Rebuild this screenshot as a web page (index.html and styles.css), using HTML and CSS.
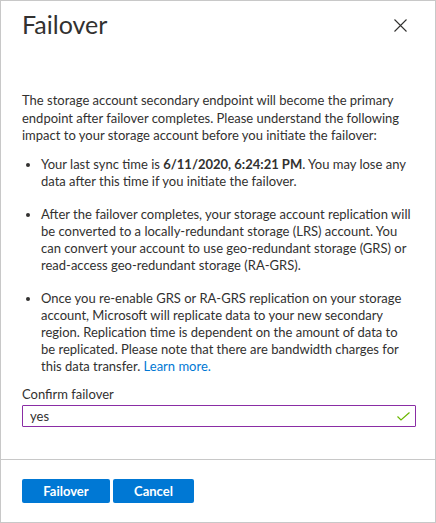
FILE: index.html
```html
<!DOCTYPE html>
<html lang="en">
<head>
<meta charset="utf-8">
<title>Failover</title>
<link rel="stylesheet" href="styles.css">
</head>
<body>
<div class="dialog">
  <div class="header">
    <h1 class="title">Failover</h1>
    <button class="close" aria-label="Close">
      <svg width="13" height="13" viewBox="0 0 13 13"><path d="M0.5 0.5L12.5 12.5M12.5 0.5L0.5 12.5" stroke="#323130" stroke-width="1.1" fill="none"/></svg>
    </button>
  </div>
  <div class="body">
    <p class="intro">The storage account secondary endpoint will become the primary endpoint after failover completes. Please understand the following impact to your storage account before you initiate the failover:</p>
    <ul class="list">
      <li>Your last sync time is <b>6/11/2020, 6:24:21 PM</b>. You may lose any data after this time if you initiate the failover.</li>
      <li>After the failover completes, your storage account replication will be converted to a locally-redundant storage (LRS) account. You can convert your account to use geo-redundant storage (GRS) or read-access geo-redundant storage (RA-GRS).</li>
      <li>Once you re-enable GRS or RA-GRS replication on your storage account, Microsoft will replicate data to your new secondary region. Replication time is dependent on the amount of data to <span class="nw">be replicated.</span> Please note that there are bandwidth charges for this data transfer. <a href="#" class="link">Learn more.</a></li>
    </ul>
    <label class="label" for="confirm">Confirm failover</label>
    <div class="field">
      <input id="confirm" class="input" type="text" value="yes">
      <svg class="check" width="13" height="9" viewBox="0 0 13 9"><path d="M0.5 4.5L4 8L12.5 0.5" stroke="#6bb700" stroke-width="1.2" fill="none"/></svg>
    </div>
  </div>
  <div class="footer">
    <button class="btn">Failover</button>
    <button class="btn btn-cancel">Cancel</button>
  </div>
</div>
</body>
</html>
```
FILE: styles.css
```css
html, body {
  margin: 0;
  padding: 0;
  background: #fff;
}
body {
  font-family: "Lato", "Noto Sans", sans-serif;
  font-size: 13px;
  color: #323130;
}
.dialog {
  width: 436px;
  height: 523px;
  box-sizing: border-box;
  border: 1px solid #c8c8c8;
  display: flex;
  flex-direction: column;
}
.header {
  display: flex;
  justify-content: space-between;
  align-items: flex-start;
  padding: 7px 28px 0 21px;
  height: 56px;
  box-sizing: border-box;
}
.title {
  margin: 0;
  font-size: 25px;
  font-weight: 400;
  line-height: 32px;
  color: #323130;
}
.close {
  border: 0;
  background: none;
  padding: 0;
  margin-top: 11px;
  width: 13px;
  height: 13px;
  display: block;
}
.close svg { display: block; }
.body {
  flex: 1;
  padding: 35px 19px 0 21px;
}
.intro {
  margin: 0;
  line-height: 17.5px;
}
.list {
  margin: 11px 0 0;
  padding: 0 0 0 19px;
  line-height: 17px;
}
.list li {
  margin-bottom: 16px;
}
.list li:last-child {
  margin-bottom: 0;
}
.nw {
  white-space: nowrap;
}
.link {
  color: #0078d4;
  text-decoration: none;
}
.label {
  display: block;
  margin-top: 10px;
  line-height: 18px;
}
.field {
  position: relative;
  margin-top: 2px;
}
.input {
  display: block;
  width: 100%;
  box-sizing: border-box;
  height: 22px;
  border: 1px solid #8a2da5;
  border-radius: 1px;
  padding: 0 24px 0 7px;
  font: inherit;
  color: #323130;
  outline: none;
}
.check {
  position: absolute;
  right: 6px;
  top: 7px;
}
.footer {
  border-top: 1px solid #c8c8c8;
  padding: 19px 0 19px 21px;
  display: flex;
  gap: 3px;
  height: 63px;
  box-sizing: border-box;
}
.btn {
  height: 24px;
  width: 88px;
  border: 0;
  border-radius: 2px;
  background: #0078d4;
  color: #fff;
  font: inherit;
  font-weight: 700;
  padding: 0;
}
.btn-cancel {
  width: 81px;
}
```
